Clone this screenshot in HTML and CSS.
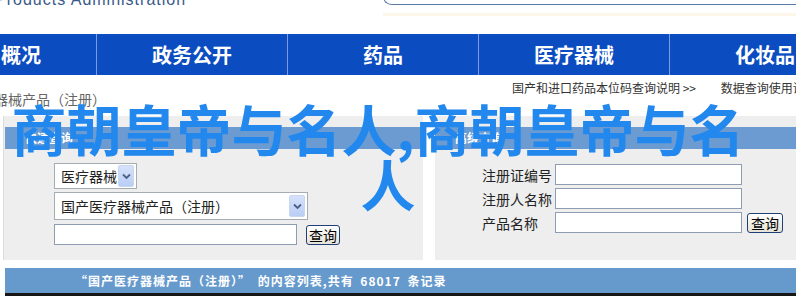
FILE: index.html
```html
<!DOCTYPE html>
<html>
<head>
    <meta charset="UTF-8">
    <title>数据查询</title>
    <link rel="stylesheet" href="styles.css">
</head>
<body>
    <div class="top">
        <div class="brand">Products Administration</div>
        <div class="search-wrap"><div class="search"></div></div>
    </div>

    <div class="nav">
        <div class="nav-item">本局概况</div>
        <div class="nav-item">政务公开</div>
        <div class="nav-item">药品</div>
        <div class="nav-item">医疗器械</div>
        <div class="nav-item">化妆品</div>
    </div>

    <div class="sub-row">
        <div class="crumb">器械产品（注册）</div>
        <div class="links">
            <span class="link">国产和进口药品本位码查询说明 &gt;&gt;</span>
            <span class="link">数据查询使用说明 &gt;&gt;</span>
        </div>
    </div>

    <div class="panels">
        <div class="panel panel-left">
            <div class="panel-head">快速查询</div>
            <div class="panel-body">
                <div class="select select-small">
                    <span>医疗器械</span>
                    <span class="arrow"><svg width="9" height="7" viewBox="0 0 9 7"><path d="M1 1.5 L4.5 5 L8 1.5" fill="none" stroke="#4d6185" stroke-width="1.8"/></svg></span>
                </div>
                <div class="select select-wide">
                    <span>国产医疗器械产品（注册）</span>
                    <span class="arrow"><svg width="9" height="7" viewBox="0 0 9 7"><path d="M1 1.5 L4.5 5 L8 1.5" fill="none" stroke="#4d6185" stroke-width="1.8"/></svg></span>
                </div>
                <div class="search-row">
                    <input class="field field-left" type="text">
                    <button class="btn" type="button">查询</button>
                </div>
            </div>
        </div>

        <div class="panel panel-right">
            <div class="panel-head">高级查询</div>
            <div class="panel-body">
                <div class="form-grid">
                    <label class="label">注册证编号</label>
                    <input class="field" type="text">
                    <span></span>
                    <label class="label">注册人名称</label>
                    <input class="field" type="text">
                    <span></span>
                    <label class="label">产品名称</label>
                    <input class="field" type="text">
                    <button class="btn" type="button">查询</button>
                </div>
            </div>
        </div>
    </div>

    <div class="result-bar">“国产医疗器械产品（注册）” 的内容列表,共有 68017 条记录</div>

    <h1 class="overlay-title">商朝皇帝与名人,商朝皇帝与名人</h1>
</body>
</html>
```

FILE: styles.css
```css
body {
    margin: 0;
    width: 796px;
    height: 297px;
    overflow: hidden;
    position: relative;
    background-color: #fff;
    font-family: "Noto Sans CJK SC", "Liberation Sans", sans-serif;
    color: #333;
}

/* cabecera */
.top {
    height: 34px;
    display: flex;
}

.brand {
    margin-top: -9px;
    margin-left: -5px;
    font-family: "Liberation Sans", Arial, sans-serif;
    font-size: 16px;
    letter-spacing: 1px;
    color: #3b5a8a;
    white-space: nowrap;
}

.search-wrap {
    margin-left: auto;
    width: 413px;
    height: 13px;
    border-bottom: 3px solid #fdf6ea;
}

.search {
    margin-top: -12px;
    height: 15px;
    border: 1px solid #5a7aa6;
    border-right: 0;
    border-radius: 10px 0 0 10px;
}

/* menu */
.nav {
    display: grid;
    grid-template-columns: repeat(5, 191px);
    margin-left: -94px;
    height: 41px;
    background-color: #0b4dc1;
}

.nav-item {
    display: flex;
    align-items: center;
    justify-content: center;
    border-right: 1px solid #7c9be0;
    color: #fff;
    font-size: 20px;
    font-weight: bold;
    white-space: nowrap;
}

/* fila de enlaces */
.sub-row {
    display: grid;
    grid-template-columns: 512px 1fr;
    height: 41px;
}

.crumb {
    margin-top: 15px;
    margin-left: -6px;
    font-size: 14px;
    line-height: 18px;
    color: #666;
    white-space: nowrap;
}

.links {
    margin-top: 5px;
    font-size: 12px;
    line-height: 16px;
    color: #333;
    white-space: nowrap;
}

.link {
    margin-right: 22px;
}

/* paneles */
.panels {
    display: flex;
    gap: 12px;
    height: 144px;
}

.panel {
    padding-top: 11px;
    background-color: #eeeeee;
}

.panel-left {
    width: 419px;
    margin-left: 3px;
    border-left: 1px solid #dcdcdc;
}

.panel-right {
    flex: 1;
}

.panel-head {
    height: 22px;
    line-height: 22px;
    margin-left: 1px;
    padding-left: 20px;
    background-color: #6b9bd1;
    color: #fff;
    font-size: 12px;
    font-weight: bold;
}

.panel-right .panel-head {
    margin-left: 0;
}

.panel-left .panel-body {
    padding: 14px 0 0 50px;
}

.panel-right .panel-body {
    padding: 15px 0 0 47px;
}

.select {
    display: flex;
    align-items: center;
    justify-content: space-between;
    box-sizing: border-box;
    padding: 0 2px 0 6px;
    background-color: #fff;
    border: 1px solid #a5acb2;
    font-size: 14px;
    color: #222;
}

.select-small {
    width: 83px;
    height: 26px;
    margin-bottom: 3px;
}

.select-wide {
    width: 254px;
    height: 28px;
    margin-bottom: 4px;
}

.arrow {
    display: flex;
    align-items: center;
    justify-content: center;
    width: 14px;
    height: 20px;
    background: linear-gradient(#d6e2fb, #b9cdf5);
    border: 1px solid #c9d6f0;
    border-radius: 2px;
}

.search-row {
    display: flex;
    align-items: center;
}

.field {
    box-sizing: border-box;
    width: 187px;
    height: 21px;
    margin: 0;
    background-color: #fff;
    border: 1px solid #8e9db2;
}

.field-left {
    width: 243px;
    margin-right: 9px;
}

.btn {
    box-sizing: border-box;
    width: 34px;
    height: 20px;
    padding: 0;
    font-family: "Noto Sans CJK SC", sans-serif;
    font-size: 14px;
    line-height: 16px;
    color: #000;
    background: linear-gradient(#ffffff, #e6e3d6);
    border: 1px solid #1e3f78;
    border-radius: 3px;
}

.form-grid {
    display: grid;
    grid-template-columns: 73px 187px auto;
    row-gap: 3px;
    align-items: center;
}

.form-grid .btn {
    width: 36px;
    margin-left: 5px;
}

.label {
    font-size: 14px;
    color: #222;
    white-space: nowrap;
}

/* barra de resultados */
.result-bar {
    margin: 8px 0 0 5px;
    height: 25px;
    padding-left: 70px;
    line-height: 25px;
    background-color: #6699cc;
    border-bottom: 3px solid #161616;
    color: #fff;
    font-size: 12px;
    font-weight: bold;
    letter-spacing: 1px;
    word-spacing: 3px;
    white-space: nowrap;
}

/* titulo superpuesto */
.overlay-title {
    position: absolute;
    top: 100px;
    left: 8px;
    width: 760px;
    margin: 0;
    text-indent: -20px;
    text-align: center;
    font-size: 55px;
    line-height: 55px;
    font-weight: bold;
    color: #2288ee;
}
```
